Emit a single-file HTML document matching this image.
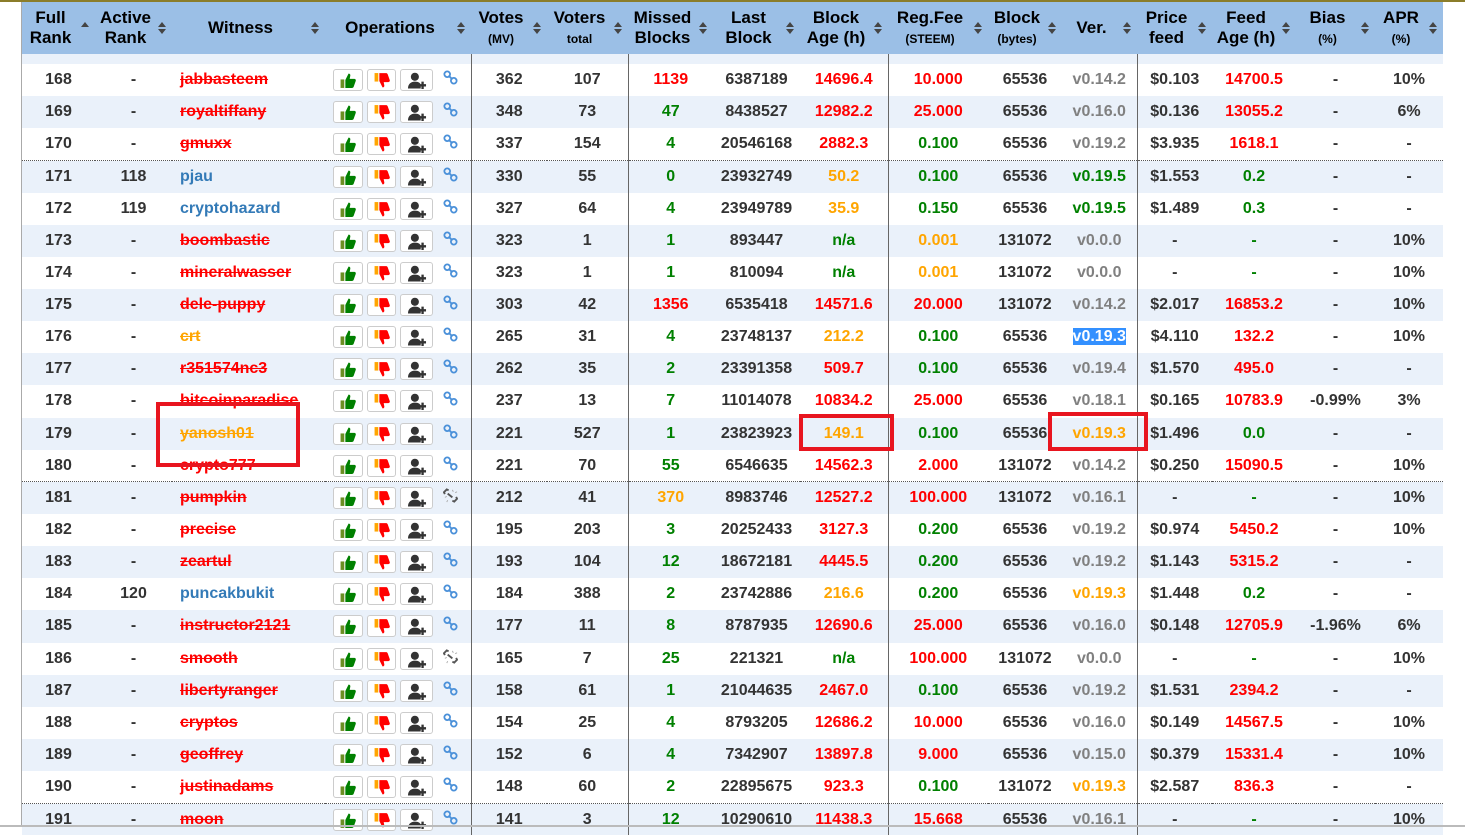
<!DOCTYPE html>
<html><head><meta charset="utf-8"><style>
*{box-sizing:border-box;margin:0;padding:0}
body{width:1465px;height:827px;overflow:hidden;background:#fff;font-family:"Liberation Sans",Arial,sans-serif;position:relative}
#top{position:absolute;left:0;top:0;width:1465px;height:2px;background:#8b7d2a}
#lb{position:absolute;left:21px;top:2px;width:1px;height:825px;background:#aaa}
#bb{position:absolute;left:0;top:825px;width:1465px;height:2px;background:#bbb}
table{position:absolute;left:22px;top:2px;border-collapse:collapse;table-layout:fixed;width:1421px}
th{background:#9bbfe6;height:52px;font-size:17px;font-weight:bold;color:#000;line-height:20px;position:relative;padding-right:16px;vertical-align:middle}
th small{font-size:12px;font-weight:bold;display:block;line-height:18px;margin-top:2px}
th .ar{position:absolute;right:6px;top:20px;width:8px;height:14px}
th .ar:before,th .ar:after{content:"";position:absolute;left:0;border-left:4.5px solid transparent;border-right:4.5px solid transparent}
th .ar:before{top:0;border-bottom:5px solid #444}
th .ar:after{top:7px;border-top:5px solid #444}
th .ar.up:after{display:none}
td{height:32.15px;text-align:center;font-size:16px;font-weight:bold;color:#333;white-space:nowrap;overflow:hidden}
tr.p td{height:10px;font-size:0;line-height:0;padding:0}
tr.b td{background:#eaf1fa}
tr.d td{border-top:1px dotted #555}
td.w{text-align:left;padding-left:8px}
.R{color:#f00}.G{color:#008000}.O{color:#ffa500}.V{color:#808080}.B{color:#337ab7}
.s{text-decoration:line-through}
.sel{background:#3390ff;color:#fff}
.vl{border-right:1px solid #666}
td.op{text-align:left;padding-left:8px}
.bt{display:inline-block;vertical-align:middle;height:22px;border:1px solid #ccc;border-radius:3px;background:#fff;margin-right:4px;text-align:center;padding-top:2px}
.bt svg{display:block;margin:0 auto}
.lk{display:inline-block;vertical-align:middle;margin-left:6px}
.box{position:absolute;border:4px solid #e8151f}
</style></head><body>
<div id="top"></div>
<svg width="0" height="0" style="position:absolute"><defs>
<symbol id="up" viewBox="0 0 16 16"><rect x="1" y="7" width="3.5" height="8" fill="#6b8e23"/><path d="M5.5 7.5L8.5 1.5c1.2 0 2 .9 1.6 2.3L9.6 6.5H14c1 0 1.6.9 1.3 1.8l-2 5.7c-.3.7-.9 1-1.5 1H5.5z" fill="#008000"/></symbol>
<symbol id="dn" viewBox="0 0 16 16"><g transform="matrix(1 0 0 -1 0 16)"><rect x="1" y="7" width="3.5" height="8" fill="#ffa500"/><path d="M5.5 7.5L8.5 1.5c1.2 0 2 .9 1.6 2.3L9.6 6.5H14c1 0 1.6.9 1.3 1.8l-2 5.7c-.3.7-.9 1-1.5 1H5.5z" fill="#f00"/></g></symbol>
<symbol id="us" viewBox="0 0 18 16"><circle cx="7" cy="4.5" r="3.8" fill="#333"/><path d="M0.5 15.5c0-4 2.5-6.5 6.5-6.5s5 1.5 5.5 3v3.5z" fill="#333"/><path d="M11 12.5h6.5M14.25 9v7" stroke="#333" stroke-width="2.2"/></symbol>
<symbol id="ln" viewBox="0 0 16 16"><g fill="none" stroke="#4a90d9" stroke-width="2"><rect x="1.5" y="1.5" width="6" height="6" rx="3" transform="rotate(45 4.5 4.5)"/><rect x="8.5" y="8.5" width="6" height="6" rx="3" transform="rotate(45 11.5 11.5)"/><path d="M6.5 6.5l3 3"/></g></symbol>
<symbol id="bk" viewBox="0 0 16 16"><g fill="none" stroke="#555" stroke-width="2"><path d="M6 2.5l-2-1-3 3 1 2M10 13.5l2 1 3-3-1-2M5 6l5 4"/></g><path d="M2 10l2-1M10 2l1 2M13 5l2-1M5 13l-1 2" stroke="#aaa" stroke-width="1"/></symbol>
</defs></svg>
<table>
<colgroup><col style="width:73px"><col style="width:77px"><col style="width:153px"><col style="width:146px"><col style="width:76px"><col style="width:81px"><col style="width:85px"><col style="width:87px"><col style="width:88px"><col style="width:100px"><col style="width:74px"><col style="width:75px"><col style="width:75px"><col style="width:84px"><col style="width:79px"><col style="width:68px"></colgroup>
<tr>
<th>Full<br>Rank<span class="ar up"></span></th>
<th>Active<br>Rank<span class="ar"></span></th>
<th>Witness<span class="ar"></span></th>
<th>Operations<span class="ar"></span></th>
<th>Votes<small>(MV)</small><span class="ar"></span></th>
<th>Voters<small>total</small><span class="ar"></span></th>
<th>Missed<br>Blocks<span class="ar"></span></th>
<th>Last<br>Block<span class="ar"></span></th>
<th>Block<br>Age (h)<span class="ar"></span></th>
<th>Reg.Fee<small>(STEEM)</small><span class="ar"></span></th>
<th>Block<small>(bytes)</small><span class="ar"></span></th>
<th>Ver.<span class="ar"></span></th>
<th>Price<br>feed<span class="ar"></span></th>
<th>Feed<br>Age (h)<span class="ar"></span></th>
<th>Bias<small>(%)</small><span class="ar"></span></th>
<th>APR<small>(%)</small><span class="ar"></span></th>
</tr>
<tr class="b p"><td></td><td></td><td></td><td class="vl"></td><td></td><td class="vl"></td><td></td><td></td><td class="vl"></td><td></td><td></td><td class="vl"></td><td></td><td></td><td></td><td></td></tr>
</table>
<div id="lb"></div><div id="bb"></div>
<div class="box" style="left:156px;top:402px;width:144px;height:65px"></div>
<div class="box" style="left:799px;top:414px;width:95px;height:37px"></div>
<div class="box" style="left:1048px;top:412px;width:100px;height:39px"></div>
<script>
const rows=[
["168","-","R|jabbasteem","362","107","R|1139","6387189","R|14696.4","R|10.000","65536","V|v0.14.2","$0.103","R|14700.5","-","10%"],
["169","-","R|royaltiffany","348","73","G|47","8438527","R|12982.2","R|25.000","65536","V|v0.16.0","$0.136","R|13055.2","-","6%"],
["170","-","R|gmuxx","337","154","G|4","20546168","R|2882.3","G|0.100","65536","V|v0.19.2","$3.935","R|1618.1","-","-"],
["171","118","B|pjau","330","55","G|0","23932749","O|50.2","G|0.100","65536","G|v0.19.5","$1.553","G|0.2","-","-"],
["172","119","B|cryptohazard","327","64","G|4","23949789","O|35.9","G|0.150","65536","G|v0.19.5","$1.489","G|0.3","-","-"],
["173","-","R|boombastic","323","1","G|1","893447","G|n/a","O|0.001","131072","V|v0.0.0","-","G|-","-","10%"],
["174","-","R|mineralwasser","323","1","G|1","810094","G|n/a","O|0.001","131072","V|v0.0.0","-","G|-","-","10%"],
["175","-","R|dele-puppy","303","42","R|1356","6535418","R|14571.6","R|20.000","131072","V|v0.14.2","$2.017","R|16853.2","-","10%"],
["176","-","O|crt","265","31","G|4","23748137","O|212.2","G|0.100","65536","S|v0.19.3","$4.110","R|132.2","-","10%"],
["177","-","R|r351574nc3","262","35","G|2","23391358","R|509.7","G|0.100","65536","V|v0.19.4","$1.570","R|495.0","-","-"],
["178","-","R|bitcoinparadise","237","13","G|7","11014078","R|10834.2","R|25.000","65536","V|v0.18.1","$0.165","R|10783.9","-0.99%","3%"],
["179","-","O|yanosh01","221","527","G|1","23823923","O|149.1","G|0.100","65536","O|v0.19.3","$1.496","G|0.0","-","-"],
["180","-","R|crypto777","221","70","G|55","6546635","R|14562.3","R|2.000","131072","V|v0.14.2","$0.250","R|15090.5","-","10%"],
["181","-","R|pumpkin","212","41","O|370","8983746","R|12527.2","R|100.000","131072","V|v0.16.1","-","G|-","-","10%"],
["182","-","R|precise","195","203","G|3","20252433","R|3127.3","G|0.200","65536","V|v0.19.2","$0.974","R|5450.2","-","10%"],
["183","-","R|zeartul","193","104","G|12","18672181","R|4445.5","G|0.200","65536","V|v0.19.2","$1.143","R|5315.2","-","-"],
["184","120","B|puncakbukit","184","388","G|2","23742886","O|216.6","G|0.200","65536","O|v0.19.3","$1.448","G|0.2","-","-"],
["185","-","R|instructor2121","177","11","G|8","8787935","R|12690.6","R|25.000","65536","V|v0.16.0","$0.148","R|12705.9","-1.96%","6%"],
["186","-","R|smooth","165","7","G|25","221321","G|n/a","R|100.000","131072","V|v0.0.0","-","G|-","-","10%"],
["187","-","R|libertyranger","158","61","G|1","21044635","R|2467.0","G|0.100","65536","V|v0.19.2","$1.531","R|2394.2","-","-"],
["188","-","R|cryptos","154","25","G|4","8793205","R|12686.2","R|10.000","65536","V|v0.16.0","$0.149","R|14567.5","-","10%"],
["189","-","R|geoffrey","152","6","G|4","7342907","R|13897.8","R|9.000","65536","V|v0.15.0","$0.379","R|15331.4","-","10%"],
["190","-","R|justinadams","148","60","G|2","22895675","R|923.3","G|0.100","131072","O|v0.19.3","$2.587","R|836.3","-","-"],
["191","-","R|moon","141","3","G|12","10290610","R|11438.3","R|15.668","65536","V|v0.16.1","-","G|-","-","10%"]];
const vl=new Set([3,5,8,11]);
function cell(v,i){let cls="",t=v;if(v.includes("|")){[cls,t]=v.split("|");}
if(cls==="S")return '<span class="sel">'+t+'</span>';
if(i===2&&cls!=="B")cls+=" s";return cls?'<span class="'+cls+'">'+t+'</span>':t;}
let h="";
rows.forEach((r,k)=>{const n=+r[0];let c=(n%2?"b":"")+((n===171||n===181||n===191)?" d":"");
h+='<tr class="'+c+'">';
const cells=[r[0],r[1],r[2],null,...r.slice(3)];
cells.forEach((v,i)=>{let cl=vl.has(i)?"vl":"";
if(i===3){const br=(n===181||n===186);h+='<td class="op vl"><span class="bt" style="width:30px"><svg width="18" height="17"><use href="#up"/></svg></span><span class="bt" style="width:29px"><svg width="18" height="17"><use href="#dn"/></svg></span><span class="bt" style="width:33px"><svg width="20" height="17"><use href="#us"/></svg></span><span class="lk"><svg width="15" height="15"><use href="#'+(br?"bk":"ln")+'"/></svg></span></td>';return;}
if(i===2)cl+=" w";
h+='<td class="'+cl+'">'+cell(v,i)+'</td>';});
h+='</tr>';});
document.querySelector("table tbody").insertAdjacentHTML("beforeend",h);
</script>
</body></html>
